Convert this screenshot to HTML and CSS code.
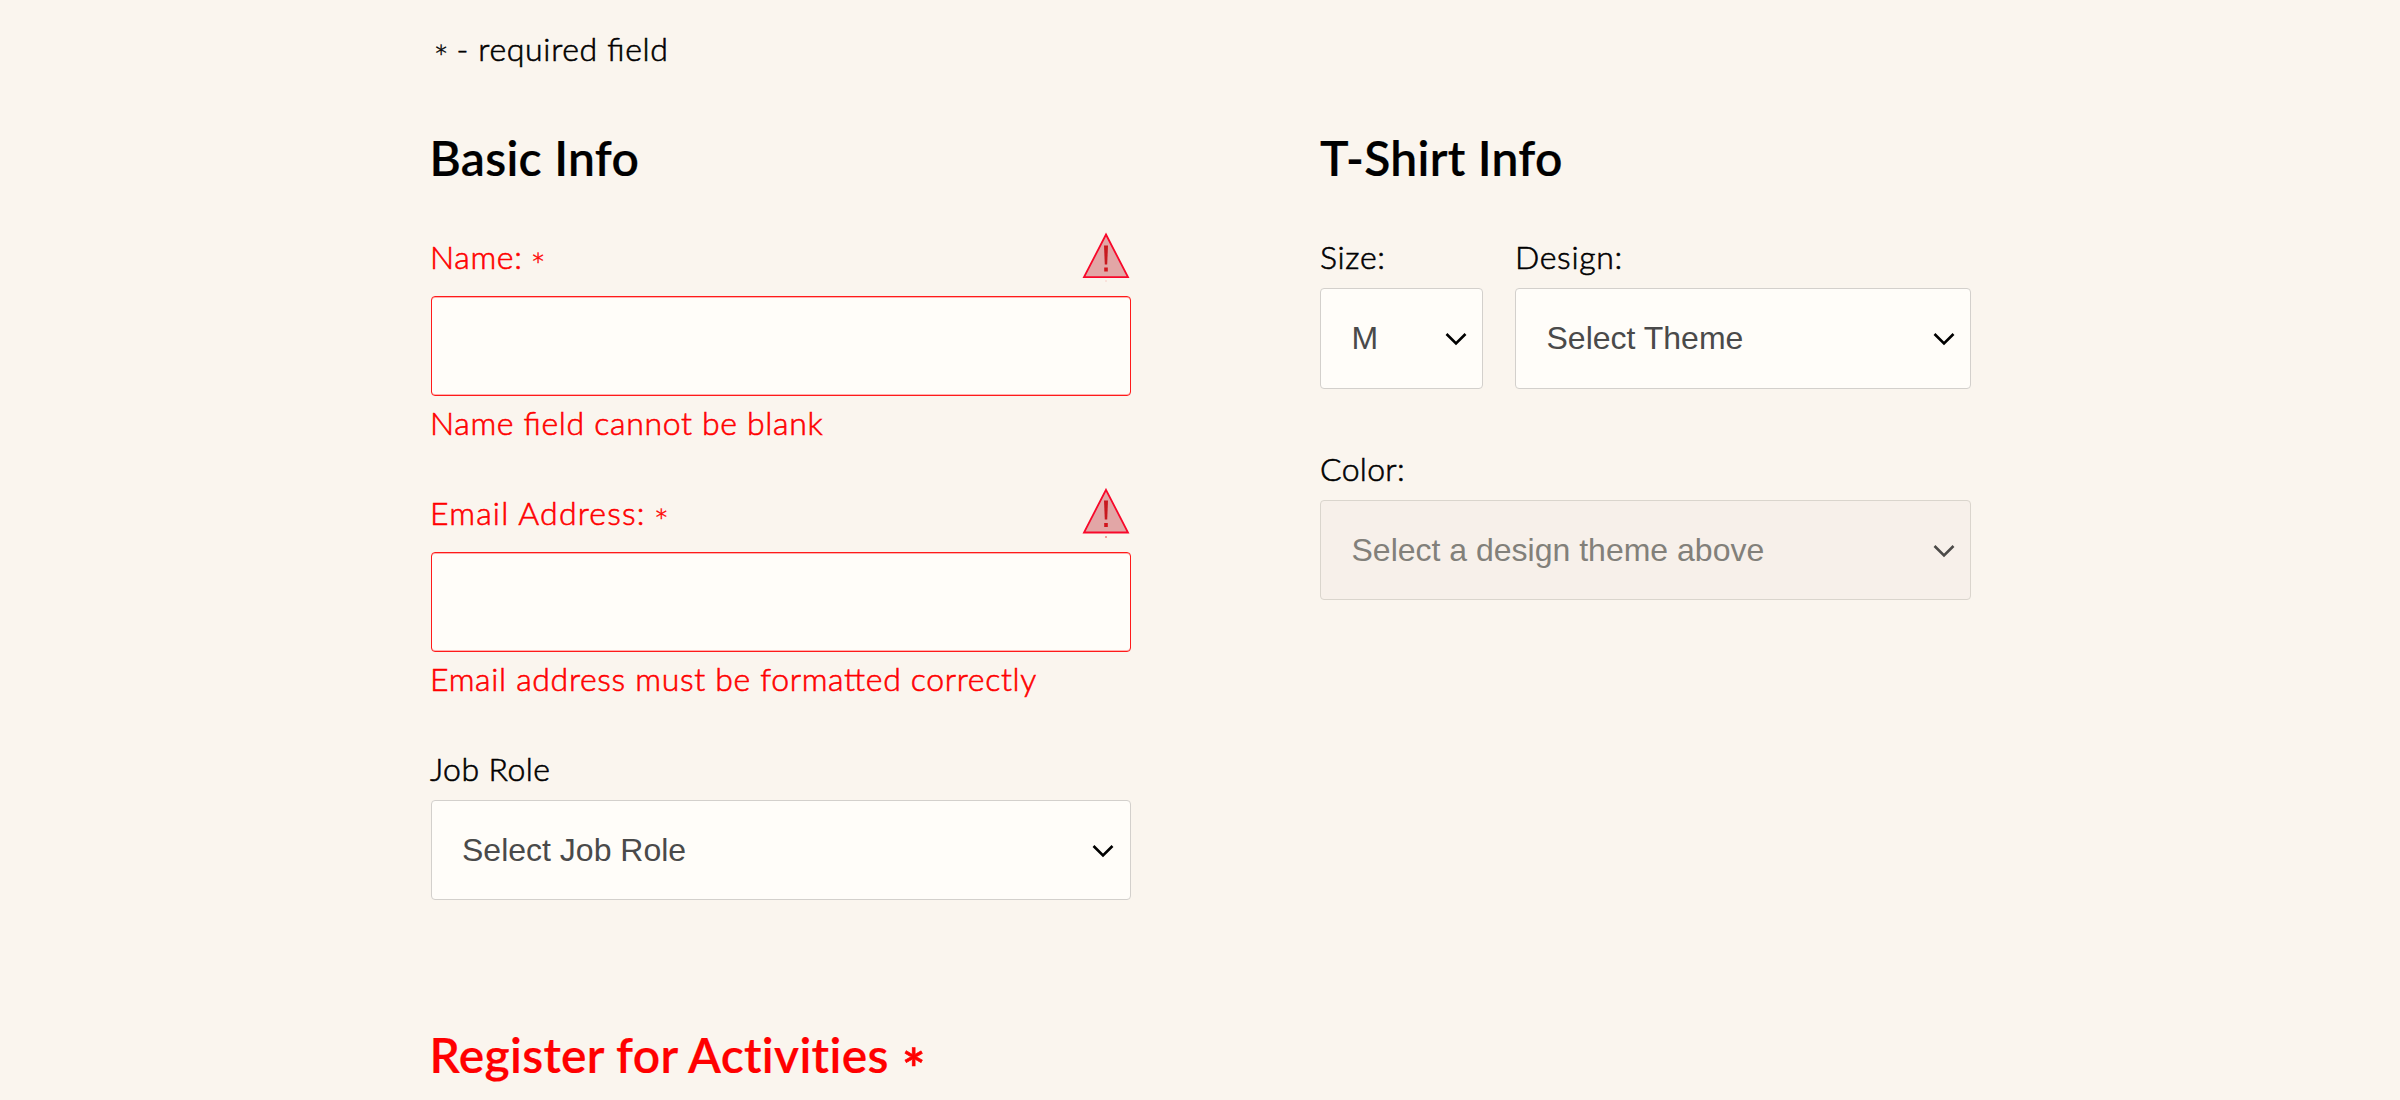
FILE: index.html
```html
<!DOCTYPE html>
<html lang="en">
<head>
<meta charset="utf-8">
<title>Registration Form</title>
<link rel="stylesheet" href="styles.css">
</head>
<body>
<form class="page">
  <p class="note"><span class="star">*</span><span>- required field</span></p>
  <div class="columns">
    <fieldset class="group basic">
      <h2 class="title">Basic Info</h2>
      <div class="field field-error">
        <div class="label-row">
          <label for="name"><span>Name:</span><span class="star">*</span></label>
          <svg class="warn" viewBox="0 0 48 51"><path d="M24 2.5 46 45.2H2Z" fill="#e2a6a6" stroke="#f8082a" stroke-width="1.8"/><path d="M22 13.5h4l-.8 19h-2.4Z" fill="#c8191f"/><path d="M22.2 35.5h3.6v4h-3.6Z" fill="#d3141d"/><path d="M23 48.5h2v1h-2Z" fill="#f7cfc8"/></svg>
        </div>
        <input id="name" type="text">
        <p class="hint">Name field cannot be blank</p>
      </div>
      <div class="field field-error">
        <div class="label-row">
          <label for="email"><span class="label-wide">Email Address:</span><span class="star">*</span></label>
          <svg class="warn" viewBox="0 0 48 51"><path d="M24 1.8 46 44.5H2Z" fill="#e2a6a6" stroke="#f8082a" stroke-width="1.8"/><path d="M22 12.5h4l-.8 19h-2.4Z" fill="#c8191f"/><path d="M22.2 35h3.6v4h-3.6Z" fill="#d3141d"/><path d="M23 48h2v2h-2Z" fill="#f2a09c"/></svg>
        </div>
        <input id="email" type="text">
        <p class="hint">Email address must be formatted correctly</p>
      </div>
      <div class="field job">
        <label for="job">Job Role</label>
        <div class="select"><select id="job"><option>Select Job Role</option></select><svg class="chevron" viewBox="0 0 22 14"><path d="M1.5 2 11 11.5 20.5 2"/></svg></div>
      </div>
    </fieldset>
    <fieldset class="group shirt">
      <h2 class="title">T-Shirt Info</h2>
      <div class="pair">
        <div class="field size">
          <label for="size">Size:</label>
          <div class="select"><select id="size"><option>M</option></select><svg class="chevron" viewBox="0 0 22 14"><path d="M1.5 2 11 11.5 20.5 2"/></svg></div>
        </div>
        <div class="field design">
          <label for="design">Design:</label>
          <div class="select"><select id="design"><option>Select Theme</option></select><svg class="chevron" viewBox="0 0 22 14"><path d="M1.5 2 11 11.5 20.5 2"/></svg></div>
        </div>
      </div>
      <div class="field color">
        <label for="color">Color:</label>
        <div class="select"><select id="color" disabled><option>Select a design theme above</option></select><svg class="chevron" viewBox="0 0 22 14"><path d="M1.5 2 11 11.5 20.5 2"/></svg></div>
      </div>
    </fieldset>
  </div>
  <h2 class="title activities"><span>Register for Activities</span><span class="star">*</span></h2>
</form>
</body>
</html>
```
FILE: styles.css
```css
* { box-sizing: border-box; }
html, body { margin: 0; height: 100%; overflow: hidden; }
body {
  background: #faf5ee;
  color: #000;
  font: 300 32px/40px Lato, sans-serif;
  letter-spacing: .67px;
  font-feature-settings: "liga" 1;
  -webkit-text-stroke: .6px currentColor;
}
p, h2, fieldset { margin: 0; padding: 0; border: 0; min-width: 0; }
.page { width: 1540px; margin-left: 430.5px; padding-top: 29px; }
.note { height: 40px; display: flex; white-space: nowrap; padding-left: 3px; }
.columns { display: grid; grid-template-columns: 700px 650.5px; column-gap: 189.5px; margin-top: 59px; }
.title {
  font-size: 48px;
  line-height: 60px;
  font-weight: 600;
  letter-spacing: .3px;
  font-feature-settings: normal;
  white-space: nowrap;
  -webkit-text-stroke-width: .2px;
}
.columns .title { margin-left: -1px; }
.columns .shirt .title { margin-left: 0; }
.field { margin-top: 49px; }
.field + .field { margin-top: 50px; }
.pair .field { margin-top: 49px; }
label { display: flex; height: 40px; white-space: nowrap; }
.job label, .field-error label, .hint { margin-left: -.5px; }
.job label { letter-spacing: .45px; }
.color label { letter-spacing: .3px; }
.label-row { display: flex; justify-content: space-between; align-items: center; height: 40px; margin-bottom: 19px; }
.label-wide { letter-spacing: 1.2px; }
.warn { width: 48px; height: 51px; flex: none; margin-right: 1px; }
.star { position: relative; top: 8px; margin-left: 8px; font-size: 36px; -webkit-text-stroke-width: .3px; }
.note .star { margin: 0 7px 0 0; }
input, select {
  display: block;
  width: 100%;
  height: 100px;
  margin: 0;
  border: 1px solid #d3d0cc;
  border-radius: 4px;
  background: #fffdf9;
  outline: 0;
}
.field-error { color: #f00; }
.field-error input {
  border-color: #ff1a1a;
  box-shadow: inset 0 1px rgba(255, 0, 0, .3), inset 0 -1px rgba(255, 0, 0, .3);
}
.hint { margin-top: 7px; white-space: nowrap; }
.select { position: relative; margin-top: 11px; }
select {
  appearance: none;
  padding: 0 40px 0 30.5px;
  color: #4a4a4a;
  font: 400 32px "Liberation Sans", sans-serif;
  letter-spacing: 0;
  -webkit-text-stroke-width: 0;
  opacity: 1;
}
select:disabled { background: #f7f0ea; color: #82807a; border-color: #dad5cd; opacity: 1; }
.chevron { position: absolute; right: 16px; top: 44px; width: 22px; height: 14px; fill: none; stroke: #000; stroke-width: 2.6; }
.job .chevron { right: 17px; }
select:disabled + .chevron { stroke: #4c4a48; }
.pair { display: grid; grid-template-columns: 162.5px 455.5px; column-gap: 32.5px; }
.pair .select select { height: 100.5px; }
.pair + .color { margin-top: 60.5px; }
.activities { display: flex; margin: 125px 0 0 -1px; color: #f00; }
.activities .star { margin-left: 13px; top: 14px; font-size: 56px; -webkit-text-stroke-width: .6px; }
```
